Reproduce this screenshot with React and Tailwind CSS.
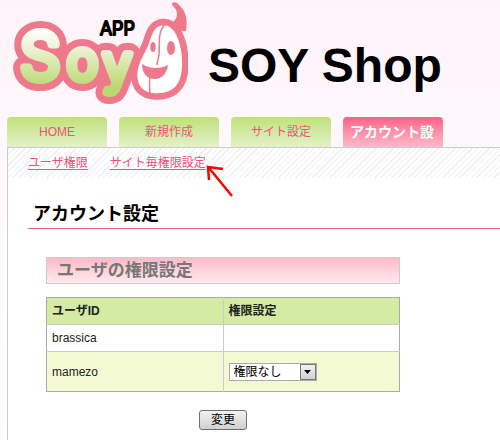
import { useState } from "react";

const tabs = [
  { label: "HOME", active: false },
  { label: "新規作成", active: false },
  { label: "サイト設定", active: false },
  { label: "アカウント設", active: true },
];

const Logo = () => (
  <svg
    width="188"
    height="112"
    viewBox="0 0 188 112"
    role="img"
    aria-label="Soy App"
    className="shrink-0 font-['Inter',sans-serif] font-light"
  >
    <defs>
      <linearGradient id="soy" gradientUnits="userSpaceOnUse" x1="0" y1="30" x2="0" y2="86">
        <stop offset="0" stopColor="#ffffff" />
        <stop offset="0.35" stopColor="#e9f2d2" />
        <stop offset="1" stopColor="#bcd971" />
      </linearGradient>
    </defs>

    {/* Pink outline behind the letters */}
    <g fill="#ee788c" stroke="#ee788c" strokeWidth="22" strokeLinejoin="round">
      <text x="20" y="79" fontSize="64">S</text>
      <text x="67" y="79" fontSize="52">o</text>
      <text x="103" y="82" fontSize="51">y</text>
    </g>
    <g fill="url(#soy)" stroke="url(#soy)" strokeWidth="8" strokeLinejoin="round">
      <text x="20" y="79" fontSize="64">S</text>
      <text x="67" y="79" fontSize="52">o</text>
      <text x="103" y="82" fontSize="51">y</text>
    </g>

    <text x="100" y="35" fontSize="18" stroke="#000" strokeWidth="2" strokeLinejoin="round">
      APP
    </text>

    {/* Bean */}
    <path
      d="M172 5C171 2 176 1 179 5C186 11 188 20 186 31C184 32 178 31 173 22C179 17 178 10 172 5Z"
      fill="#ee788c"
    />
    <path
      d="M164 22C154 22 150 29 147 39C144 51 134 60 134 74C134 88 142 96 155 96.500C172 97 182 89 184.500 74C187 59 184 43 179 33C175 26 170 22 164 22Z"
      fill="#fff"
      stroke="#ee788c"
      strokeWidth="6.500"
    />
    <path
      d="M165 24C157 33 160 46 159 55C158 60 157 62 157 65M150 77C149 84 150 90 150 96"
      fill="none"
      stroke="#ee788c"
      strokeWidth="1.500"
    />
    <ellipse cx="153" cy="47" rx="2.700" ry="5" fill="#ee788c" />
    <ellipse cx="171" cy="48" rx="4" ry="7" fill="#ee788c" />
    <path d="M142 64C150 69 160 69 168 65C167 73 162 79 155 79C147 79 142 73 142 64Z" fill="#ee788c" />
  </svg>
);

const App = () => {
  const [permission, setPermission] = useState("none");

  return (
    <div className="flex min-h-screen flex-col overflow-x-hidden bg-linear-to-b from-[#fef3f9] via-[#fefafd] to-white font-['Liberation_Sans','Noto_Sans_CJK_JP',sans-serif] text-xs text-[#222]">
      <header className="flex items-center gap-5">
        <Logo />
        <h1 className="pt-5 text-5xl font-bold text-black">SOY Shop</h1>
      </header>

      <nav className="flex gap-3 pt-[5px] pl-[7px]">
        {tabs.map((tab) => (
          <a
            key={tab.label}
            href="#"
            className={
              tab.active
                ? "flex h-[30px] w-[100px] items-center rounded-t bg-linear-to-b from-[#fb6088] to-[#fbb9cb] px-[7px] text-sm font-bold whitespace-nowrap text-white"
                : "flex h-[30px] w-[100px] items-center justify-center rounded-t bg-linear-to-b from-[#bfe177] to-[#e4f1c8] text-[#f0507c]"
            }
          >
            {tab.label}
          </a>
        ))}
      </nav>

      <main className="relative ml-[7px] flex-1 border-t border-l border-[#ccc] bg-white">
        <div className="flex h-[30px] items-center gap-[22px] bg-[repeating-linear-gradient(135deg,#efefef_0px,#efefef_1px,#ffffff_1px,#ffffff_4px)] pl-5 text-[#f0507c]">
          <a href="#" className="underline underline-offset-2">ユーザ権限</a>
          <a href="#" className="underline underline-offset-2">サイト毎権限設定</a>
        </div>

        {/* Pointer on top of the sub menu */}
        <svg
          className="absolute top-4 left-[198px]"
          width="30"
          height="34"
          viewBox="0 0 30 34"
          fill="none"
          stroke="#f00"
          strokeWidth="2.500"
          aria-hidden="true"
        >
          <path d="M26 32L3 4M17 5L2 3L3 16" />
        </svg>

        <h2 className="mt-6 ml-5 border-b border-b-[#ee5a80] pb-0.5 pl-[5px] text-lg leading-6 font-bold text-black">
          アカウント設定
        </h2>

        <section className="ml-5 pt-7 pl-[18px]">
          <div className="w-[354px] max-w-full">
            <h3 className="border border-[#ccc] bg-linear-to-b from-[#fcbac8] to-[#feeaee] pl-2.5 text-[17px] leading-[25px] font-bold text-[#777]">
              ユーザの権限設定
            </h3>

            <table className="mt-[13px] w-full table-fixed border-collapse border border-[#aaa] text-left">
              <thead>
                <tr className="h-[27px] bg-[#d3eba3]">
                  <th className="border-r border-b border-[#ccc] px-[5px]">ユーザID</th>
                  <th className="border-b border-[#ccc] px-[5px]">権限設定</th>
                </tr>
              </thead>
              <tbody>
                <tr className="h-[27px]">
                  <td className="border-r border-b border-[#ccc] px-[5px]">brassica</td>
                  <td className="border-b border-[#ccc] px-[5px]"></td>
                </tr>
                <tr className="h-10 bg-[#f3fad3]">
                  <td className="border-r border-[#ccc] px-[5px]">mamezo</td>
                  <td className="px-[5px]">
                    <div className="relative h-[18px] w-[88px]">
                      <select
                        aria-label="権限設定"
                        value={permission}
                        onChange={(e) => setPermission(e.target.value)}
                        className="block h-full w-full appearance-none border border-[#aaa] bg-white pl-1 text-xs leading-4 text-black"
                      >
                        <option value="none">権限なし</option>
                      </select>
                      <span className="pointer-events-none absolute inset-y-px right-px flex w-4 items-center justify-center border border-[#777] bg-linear-to-b from-[#f2f2f2] to-[#d0d0d0]">
                        <svg width="7" height="4" viewBox="0 0 7 4" aria-hidden="true">
                          <path d="M0 0H7L3.500 4Z" fill="#000" />
                        </svg>
                      </span>
                    </div>
                  </td>
                </tr>
              </tbody>
            </table>

            <div className="flex justify-center pt-[18px]">
              <button
                type="button"
                className="h-5 w-12 rounded-[3px] border border-[#707070] bg-linear-to-b from-[#f2f2f2] to-[#d0d0d0] text-xs leading-4 text-black"
              >
                変更
              </button>
            </div>
          </div>
        </section>
      </main>
    </div>
  );
};

export default App;
